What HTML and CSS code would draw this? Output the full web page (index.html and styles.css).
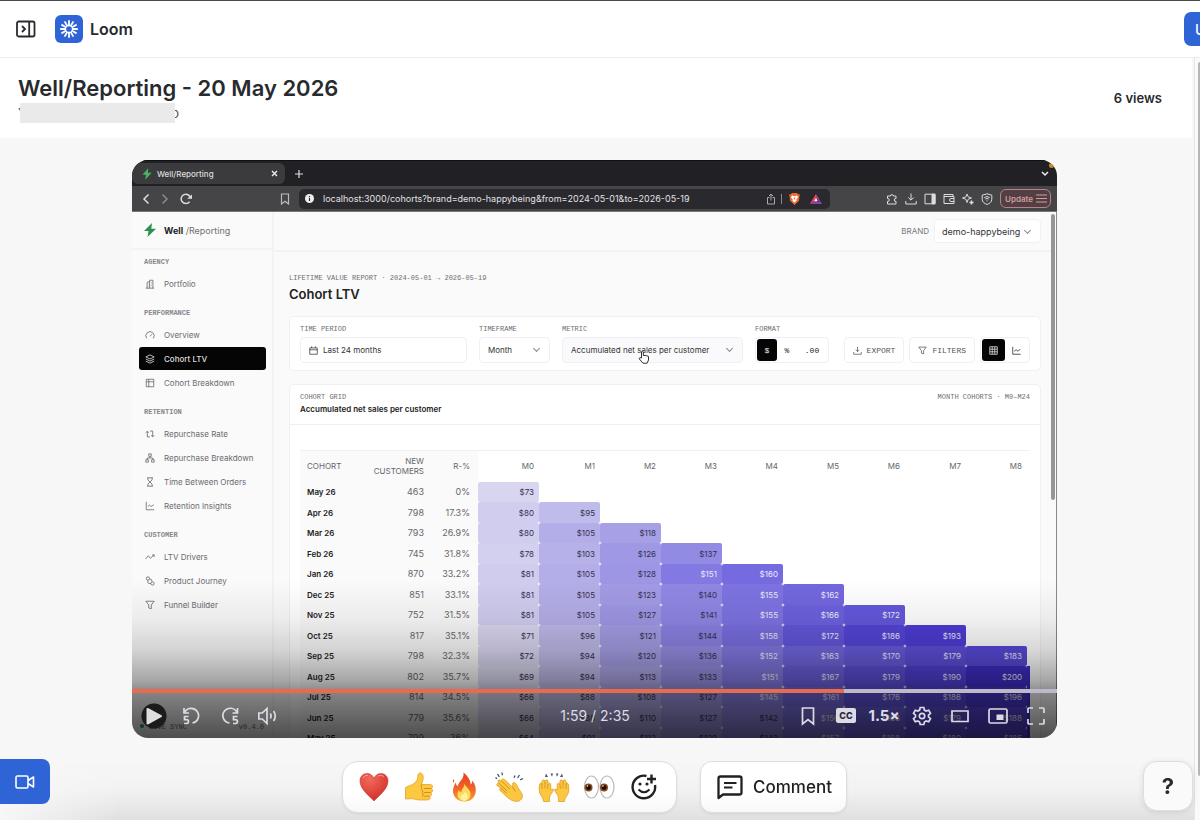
FILE: index.html
```html
<!DOCTYPE html>
<html lang="en">
<head>
  <meta charset="utf-8" />
  <meta name="viewport" content="width=device-width, initial-scale=1" />
  <title>Well/Reporting - 20 May 2026</title>
  <link rel="stylesheet" href="styles.css">
  <script src="script.js" defer></script>
</head>
<body>

  <header class="topbar">
    <button class="icon-btn" aria-label="Expand sidebar">
      <svg width="20" height="20" viewBox="0 0 20 20" fill="none" stroke="#292a2e" stroke-width="1.8"><rect x="1" y="2.5" width="17.5" height="15" rx="1.8"/><path d="M13.2 2.5v15M6 7l3 3-3 3"/></svg>
    </button>
    <a class="brand" href="#">
      <span class="brand-mark">
        <svg width="20" height="20" viewBox="-10 -10 20 20" stroke="#fff" fill="none"><circle r="3.6" stroke-width="1.5"/><path stroke-width="1.8" d="M0-4v-4.800M0 4v4.800M3.500-2l4.100-2.400M-3.500-2l-4.100-2.400M3.500 2l4.100 2.400M-3.500 2l-4.100 2.400M2-3.500l2.400-4.100M-2-3.500l-2.400-4.100M2 3.500l2.400 4.100M-2 3.500l-2.400 4.100M4 0h4.800M-4 0h-4.800"/></svg>
      </span>
      Loom
    </a>
    <div class="topbar-end"><button class="upgrade">Upgrade</button></div>
  </header>

  <div class="page">
    <main>
      <section class="title-row">
        <div>
          <h1>Well/Reporting - 20 May 2026</h1>
          <div class="owner"><span>Y</span><span>o</span></div>
        </div>
        <span class="views">6 views</span>
      </section>

      <div class="stage">
        <div class="player">

          <div class="tabs">
            <div class="tab">
              <svg width="10" height="12" viewBox="0 0 12 14"><path fill="#45b563" d="M7.5 0L.5 8h4.2L4 14l7.5-8.4H7z"/></svg>
              <span>Well/Reporting</span>
              <svg class="tab-close" width="7" height="7" viewBox="0 0 7 7" stroke="#eee" stroke-width="1.4"><path d="M1 1l5 5M6 1L1 6"/></svg>
            </div>
            <svg width="8" height="8" viewBox="0 0 8 8" stroke="#ddd" stroke-width="1.2"><path d="M4 0v8M0 4h8"/></svg>
            <svg class="tabs-more" width="8" height="6" viewBox="0 0 8 6" stroke="#eee" stroke-width="1.5" fill="none"><path d="M1 1l3 3 3-3"/></svg>
            <span class="rec-dot"></span>
          </div>

          <div class="toolbar">
            <div class="nav-icons">
              <svg width="8" height="12" viewBox="0 0 8 12" fill="none" stroke="#ddd" stroke-width="1.5"><path d="M6.500 1.500L2 6l4.500 4.500"/></svg>
              <svg width="8" height="12" viewBox="0 0 8 12" fill="none" stroke="#8a8a8d" stroke-width="1.5"><path d="M1.500 1.500L6 6l-4.500 4.500"/></svg>
              <svg width="12" height="12" viewBox="0 0 12 12" fill="none" stroke="#ddd" stroke-width="1.5"><path d="M9.600 8.800A4.700 4.700 0 1 1 10.500 5"/><path fill="#ddd" stroke="none" d="M7.200 5.800H12V1.500z"/></svg>
            </div>
            <svg class="tb-mark" width="10" height="12" viewBox="0 0 10 12" fill="none" stroke="#bbb" stroke-width="1.2"><path d="M1.500 1h7v10L5 8.300 1.500 11z"/></svg>
            <div class="address">
              <svg width="9" height="9" viewBox="0 0 9 9"><circle cx="4.500" cy="4.500" r="4.500" fill="#eee"/><path stroke="#29292e" stroke-width="1.200" d="M4.500 4v3M4.500 2v1.200"/></svg>
              <input type="text" aria-label="Address" value="localhost:3000/cohorts?brand=demo-happybeing&amp;from=2024-05-01&amp;to=2026-05-19">
              <svg width="10" height="12" viewBox="0 0 10 12" fill="none" stroke="#aaa"><path d="M3.500 4.500H1.500V11h7V4.500h-2M5 7.500V1M3 3l2-2 2 2"/></svg>
              <i class="bar"></i>
              <svg width="11" height="12" viewBox="0 0 11 12"><path fill="#f1682d" d="M3 0h5l1.200 1.200L11 1.500l-.6 2L10 7.800 5.500 12 1 7.800.6 3.500 0 1.500l1.800-.3z"/><path fill="#fff" d="M3 2.600l2.500.6L8 2.600l1 1.900-1.700 2 .3 1.300-2.100 1.600-2.100-1.600.3-1.300-1.700-2z"/><path fill="#f1682d" d="M4.600 4.500h1.800l-.5 2h-.8z"/></svg>
              <svg class="bat" width="12" height="10" viewBox="0 0 12 10"><path fill="#d8344f" d="M6 0l3 5-3 1-6 4z"/><path fill="#8a3fa8" d="M6 0l6 10H0l4-3 5 1z"/><path fill="#e6475a" d="M6 0L0 10l4-3 2-3z"/><path fill="#fff" d="M6 4l1.800 3.200H4.200z"/></svg>
            </div>
            <div class="ext-icons">
              <svg viewBox="0 0 12 12"><path d="M1.500 3h3a1.400 1.400 0 1 1 2.800 0H10v2.600a1.400 1.400 0 1 0 0 2.700V11H1.500V8.300a1.400 1.400 0 1 0 0-2.700z"/></svg>
              <svg viewBox="0 0 12 12"><path d="M6 .5V7M3.300 4.500L6 7.200l2.700-2.700M.8 8v3h10.400V8"/></svg>
              <svg viewBox="0 0 12 12"><path d="M1 1.200h10v9.600H1z"/><path fill="#ddd" d="M8 1.200h3v9.600H8z"/></svg>
              <svg viewBox="0 0 12 12"><path d="M1 1.500h9v2H1zM1 3.500v7h10v-7zM11 5.500H8a1.500 1.500 0 0 0 0 3h3"/></svg>
              <svg viewBox="0 0 12 12"><path d="M5 1l1.200 2.900L9.500 5 6.200 6.200 5 9.500 3.800 6.200.5 5l3.300-1.100z"/><path d="M9.500 7.500v4M7.500 9.500h4" stroke-width="1.500"/></svg>
              <svg viewBox="0 0 12 12"><path d="M6 .8l4.800 1.400v4C10.800 9 8.500 10.700 6 11.400 3.500 10.700 1.200 9 1.200 6.200v-4z"/><path d="M3.300 4.500q2.700-1.800 5.400 0M4.300 6q1.700-1 3.400 0M6 7.300v1"/></svg>
            </div>
            <button class="update">Update
              <svg width="11" height="9" viewBox="0 0 11 9" stroke="#d59b9c" stroke-width="1.200"><path d="M0 1h11M0 4.500h11M0 8h11"/></svg>
            </button>
          </div>

          <div class="app">
            <aside class="side">
              <div class="side-logo">
                <svg width="12" height="14" viewBox="0 0 12 14"><path fill="#2f8f4e" d="M8 0L0 8h4.500L3.500 14 12 5.700H7.300z"/></svg>
                <p><b>Well</b> /Reporting</p>
              </div>
              <nav>
                <h4>AGENCY</h4>
                <a href="#"><svg viewBox="0 0 12 12"><path d="M1 11h10M2.500 11V4l3-1v8M5.500 3V1.500h4V11M7.500 4v1M7.500 7v1M4 6v.5M4 8.500V9"/></svg>Portfolio</a>
                <h4>PERFORMANCE</h4>
                <a href="#"><svg viewBox="0 0 12 12"><path d="M2 10a5 5 0 1 1 8 0M6 7.500L8.500 5"/></svg>Overview</a>
                <a href="#" class="active"><svg viewBox="0 0 12 12"><path d="M6 1l5 2.500L6 6 1 3.500zM1 6l5 2.500L11 6M1 8.500L6 11l5-2.500"/></svg>Cohort LTV</a>
                <a href="#"><svg viewBox="0 0 12 12"><path d="M1.500 1.500h9v9h-9zM1.500 4.500h9M4.500 1.500v9"/></svg>Cohort Breakdown</a>
                <h4>RETENTION</h4>
                <a href="#"><svg viewBox="0 0 12 12"><path d="M1 4.500l1.800-2 1.700 2M2.800 3v6.500H6M11 7.500l-1.800 2-1.700-2M9.200 9V2.500H6"/></svg>Repurchase Rate</a>
                <a href="#"><svg viewBox="0 0 12 12"><path d="M4.500 1h3v3h-3zM1 8h3v3H1zM8 8h3v3H8zM6 4v2M2.500 8V6h7v2"/></svg>Repurchase Breakdown</a>
                <a href="#"><svg viewBox="0 0 12 12"><path d="M2.500 1h7M2.500 11h7M3.500 1v2.500L8.500 8.500V11M8.500 1v2.500L3.500 8.500V11"/></svg>Time Between Orders</a>
                <a href="#"><svg viewBox="0 0 12 12"><path d="M1.500 1v9.500H11M3.500 6.500l2-1.500 2 1.500 3-2"/></svg>Retention Insights</a>
                <h4>CUSTOMER</h4>
                <a href="#"><svg viewBox="0 0 12 12"><path d="M.5 8.500l3.500-4 2.500 3 4.500-4M8.500 3.500H11V6"/></svg>LTV Drivers</a>
                <a href="#"><svg viewBox="0 0 12 12"><circle cx="3.500" cy="3" r="2"/><circle cx="9" cy="9" r="2"/><path d="M3.500 5v2.500q0 1.500 1.500 1.500h2M5.500 3.500q3 0 3 3.500"/></svg>Product Journey</a>
                <a href="#"><svg viewBox="0 0 12 12"><path d="M1 1.500h10L7.500 6v4.500l-3-1V6z"/></svg>Funnel Builder</a>
              </nav>
              <div class="side-foot"><span><i></i>LIVE SYNC</span><span>v0.4.0</span></div>
            </aside>

            <div class="content">
              <div class="content-head">
                <label for="brand">BRAND</label>
                <span class="pick pick-brand"><select id="brand"><option>demo-happybeing</option></select></span>
              </div>

              <div class="report">
                <p class="mono">LIFETIME VALUE REPORT · 2024-05-01 → 2026-05-19</p>
                <h2>Cohort LTV</h2>

                <div class="card filters">
                  <div class="field period">
                    <span class="mono">TIME PERIOD</span>
                    <button class="ctl"><svg width="9" height="9" viewBox="0 0 12 12"><path d="M1 2.500h10V11H1zM1 5h10M3.500.5v2M8.500.5v2"/></svg>Last 24 months</button>
                  </div>
                  <div class="field timeframe">
                    <label class="mono" for="timeframe">TIMEFRAME</label>
                    <span class="pick"><select id="timeframe"><option>Month</option></select></span>
                  </div>
                  <div class="field metric">
                    <label class="mono" for="metric">METRIC</label>
                    <span class="pick tinted"><select id="metric"><option>Accumulated net sales per customer</option></select></span>
                  </div>
                  <div class="field">
                    <span class="mono">FORMAT</span>
                    <div class="segment format"><button class="on">$</button><button>%</button><button>.00</button></div>
                  </div>
                  <div class="actions">
                    <button class="ctl code"><svg width="9" height="9" viewBox="0 0 12 12"><path d="M6 1v6.500M3.500 5L6 7.500 8.500 5M1 8v3h10V8"/></svg>EXPORT</button>
                    <button class="ctl code"><svg width="9" height="9" viewBox="0 0 12 12"><path d="M1 1.500h10L7.500 6v4.500l-3-1V6z"/></svg>FILTERS</button>
                    <div class="segment view">
                      <button class="on" aria-label="Table"><svg width="9" height="9" viewBox="0 0 12 12"><path d="M1 1h10v10H1zM1 4.300h10M1 7.700h10M4.300 1v10M7.700 1v10"/></svg></button>
                      <button aria-label="Chart"><svg width="9" height="9" viewBox="0 0 12 12"><path d="M1 1v10h10.500M3 7l2.500-2L8 7l3-3"/></svg></button>
                    </div>
                  </div>
                </div>

                <div class="card grid-card">
                  <div class="grid-head">
                    <div>
                      <p class="mono">COHORT GRID</p>
                      <h3>Accumulated net sales per customer</h3>
                    </div>
                    <p class="mono">MONTH COHORTS · M0–M24</p>
                  </div>
                  <table>
                    <colgroup><col class="c-name"><col class="c-new"><col class="c-rate"><col span="9" class="c-month"><col></colgroup>
                    <thead>
                      <tr><th>COHORT</th><th>NEW<br>CUSTOMERS</th><th>R-%</th><th>M0</th><th>M1</th><th>M2</th><th>M3</th><th>M4</th><th>M5</th><th>M6</th><th>M7</th><th>M8</th><th></th></tr>
                    </thead>
                    <tbody id="cohorts"></tbody>
                  </table>
                </div>
              </div>
            </div>
            <div class="app-scroll"><i></i></div>
          </div>

          <svg class="pointer" width="12" height="14" viewBox="0 0 12 14"><path fill="#fff" stroke="#333" d="M3.500 8V1.800q.9-1.300 1.800 0V5.500q2.500-.5 5.200.9V10l-1.400 3.200H5L1 8.600q.8-1.600 2.500-.6z"/></svg>

          <div class="shade"></div>
          <div class="controls">
            <div class="progress"><div style="width:77%"></div></div>
            <div class="control-row">
              <div class="control-group left">
                <button class="play" aria-label="Play"><svg width="20" height="20" viewBox="0 0 20 20"><path fill="#dedede" stroke="#dedede" stroke-width="2" stroke-linejoin="round" d="M3.500 3v14.500L17 10.200z"/></svg></button>
                <button aria-label="Back 5 seconds"><svg width="20" height="20" viewBox="0 0 20 20"><path d="M2 2v5h5M2.500 6.500A7.400 7.400 0 1 1 10.500 17"/><path d="M6.500 10.500h-4v3.200h2q2 .2 2 1.900t-2 1.900H2"/></svg></button>
                <button aria-label="Forward 5 seconds"><svg width="20" height="20" viewBox="0 0 20 20"><path d="M17.500 2v5h-5M17 6.500A7.400 7.400 0 1 0 9.500 17"/><path d="M17.500 10.500h-4v3.200h2q2 .2 2 1.900t-2 1.900H13"/></svg></button>
                <button aria-label="Volume"><svg width="20" height="20" viewBox="0 0 20 20"><path d="M.8 7h3.500L9 2.500v15L4.300 13H.8zM12.300 7.500q1.500 2.500 0 5M15.500 5q3.500 5 0 10"/></svg></button>
              </div>
              <span class="time">1:59 / 2:35</span>
              <div class="control-group right">
                <button aria-label="Bookmark"><svg width="20" height="20" viewBox="0 0 20 20"><path d="M4.500 2h11v16L10 13.500 4.500 18z"/></svg></button>
                <button aria-label="Captions" class="cc"><span>CC</span></button>
                <button class="speed">1.5×</button>
                <button aria-label="Settings"><svg width="20" height="20" viewBox="0 0 20 20"><path d="M8.200 1.500h3.600l.6 2.600 1.700 1 2.600-.8 1.800 3.100-2 1.800v1.700l2 1.800-1.800 3.100-2.600-.8-1.700 1-.6 2.500H8.200L7.600 16l-1.700-1-2.600.8-1.800-3.100 2-1.800V9.200l-2-1.800 1.800-3.100 2.600.8 1.700-1z"/><circle cx="10" cy="10" r="2.700"/></svg></button>
                <button aria-label="Theater"><svg width="20" height="20" viewBox="0 0 20 20"><path d="M2 5h16v10.500H2z"/></svg></button>
                <button aria-label="Picture in picture"><svg width="20" height="20" viewBox="0 0 20 20"><rect x="1" y="3" width="18" height="14" rx="1.500"/><path fill="#dcdae4" stroke="none" d="M8.500 8.500h7v5.500h-7z"/></svg></button>
                <button aria-label="Fullscreen"><svg width="20" height="20" viewBox="0 0 20 20"><path d="M2 7V3q0-1 1-1h4M13 2h4q1 0 1 1v4M18 13v4q0 1-1 1h-4M7 18H3q-1 0-1-1v-4"/></svg></button>
              </div>
            </div>
          </div>
        </div>

        <div class="dock">
          <div class="dock-card reactions">
            <button aria-label="Love"><svg width="30" height="30" viewBox="0 0 30 30"><defs><radialGradient id="heart" cx=".35" cy=".2" r=".8"><stop offset="0" stop-color="#f26a5c"/><stop offset="1" stop-color="#d3302b"/></radialGradient></defs><path fill="url(#heart)" stroke="#c2362c" stroke-width=".6" d="M15 29C10.500 24 1 17.500 1 9c0-4.500 3-7.500 7-7.500 3.500 0 6 2 7 5 1-3 3.500-5 7-5 4 0 7 3 7 7.500 0 8.500-9.500 15-14 20z"/><path fill="none" stroke="#fa9d92" stroke-width="1" d="M4 6q1.500-3 5-2.800M19 4q2.500-2 6 .5"/></svg></button>
            <button aria-label="Thumbs up"><svg width="30" height="30" viewBox="0 0 30 30"><path fill="#fbc83f" stroke="#dd9c1e" stroke-width=".7" d="M1.500 15.500l3-1.500c4-1 7.500-3.500 8.800-6.500.7-1.600.4-4.500 1-5.500.8-1.600 3.600-1.400 4.500 1 1.300 3.200-.3 6.500-1.300 9.500h8.700c3 0 3 3.700.8 4 2.500.5 2 4-.4 4 1.800.9 1 3.700-1 3.700 1.300 1.300.4 3.800-2 3.800H16c-3.500 0-5.500-1-7.500-1.300l-7 .3z"/><path fill="none" stroke="#d58e1b" stroke-width="1" d="M17.500 12.500q-1 2 .5 4M27 16.500h-7M26.600 20.500H20M25.600 24.200H20M17 17q2.500 1 1.500 3.700 1.500 1.800 0 4"/></svg></button>
            <button aria-label="Fire"><svg width="30" height="30" viewBox="0 0 30 30"><defs><linearGradient id="fire" x2="0" y2="1"><stop offset="0" stop-color="#e63c20"/><stop offset=".6" stop-color="#f4682b"/><stop offset="1" stop-color="#f9a12e"/></linearGradient></defs><path fill="url(#fire)" d="M14.500.5c3 2.500 7 6.500 7.200 12 1.200-1 1.600-2.300 1.600-4 3 4 4.200 8 3.200 12.500-1 5-5.500 8.500-11 8.500-6.500 0-11.500-4.500-11.500-10.500 0-3.500 1.500-6 2.400-8.500.6 1.800 1 3 2.600 3.800C9 9.500 15.500 7.500 14.500.5zM4.500 7q1.500 1.700.2 4-1.700-1.500-.2-4z"/><path fill="#ffdc58" d="M15.500 11.500c1 4 5.500 5 6 10 .4 4.500-2.500 7.500-6 7.500-4 0-7-2.500-7-6.500 0-2 .7-3.500 1.500-4.500.5 1.200 1 2 2.300 2.400 0-3.500 3.400-4.900 3.200-8.900z"/><path fill="#fff2a8" d="M16 20q3.500 3 2.500 6-1.200 2.700-3.500 2.700T11.500 26q0-2 1.500-3 2-.5 3-3z"/></svg></button>
            <button aria-label="Clap"><svg width="30" height="30" viewBox="0 0 30 30"><path fill="#fbc740" stroke="#d9961d" stroke-width=".7" d="M3 13.500c-.8-1.400.9-2.800 2.200-1.800l-1-1.600c-.9-1.700 1.200-3 2.500-1.700L8 9.500c-1.300-1.900 1-3.500 2.500-2l8 7.500c.6-1.800-.6-3.600.7-4.300 2-.9 3.600 2 4.700 5 2 3 4.600 6.300 4.600 8.800 0 1.500-2 4-3.500 4.600-3.500.9-7.500-.4-10.500-2.800l-8.500-7.800c-1.300-1.300 0-2.700 1.300-2.200z"/><path fill="none" stroke="#d0881a" stroke-width=".9" d="M5.200 11.700l8 7.300M8 9.500l8 7.500M7 16.300l5.500 5M18.500 15l3 4.500"/><path fill="none" stroke="#43546b" stroke-width="1.300" d="M1.500 5.500L3 6.800M3.500 2l1.800 2.800M8 .5l.3 2.800M21 3.500l-1 2.300M25.500 3L23.500 6M29 6.500l-2.800 1.300"/></svg></button>
            <button aria-label="Raised hands"><svg width="32" height="30" viewBox="0 0 32 30"><g id="hand"><path fill="#fbc740" stroke="#d9961d" stroke-width=".7" d="M5.500 29.500c0-4-3.500-6-4-9.500-.6-3.500-.5-7 .6-8.500.8-1 1.800-.4 1.800 1-.2-2.500.2-4.500 1.400-4.800 1.400-.2 1.700 2 1.700 4 .1-2.300.7-4.200 2-3.900 1.300.2 1.300 2.600 1 5 .7-1.500 2-2.200 2.500-1 .5 1.500.2 4 .4 6.200 1.200-1.200 2.600-1.400 2.500-.1-.5 2.500-2.900 4-3.500 6.300-.5 1.300-.4 3.300-.3 5.300z"/><path fill="none" stroke="#d0881a" stroke-width=".7" d="M3.900 12v5M7 11.500v5M10 12.500l-.5 4.500"/></g><use href="#hand" transform="matrix(-1 0 0 1 32 0)"/><path fill="#43546b" d="M7 5l1-3.500L10 5zM12.500 1.500h2.500l-1 3.300zM18 1.500h2.500l-1.600 3.300zM22 5l2-3.500L25 5z"/></svg></button>
            <button aria-label="Eyes"><svg width="32" height="30" viewBox="0 0 32 30"><g fill="#fff" stroke="#b9b9b9" stroke-width="1.200"><ellipse cx="8.500" cy="15" rx="7" ry="11"/><ellipse cx="24" cy="15" rx="7" ry="11"/></g><circle cx="5.500" cy="15.500" r="4" fill="#8b4a1c"/><circle cx="21" cy="15.500" r="4" fill="#8b4a1c"/><circle cx="5.500" cy="15.500" r="2.400" fill="#1b0d05"/><circle cx="21" cy="15.500" r="2.400" fill="#1b0d05"/><circle cx="4.500" cy="14" r=".8" fill="#fff"/><circle cx="20" cy="14" r=".8" fill="#fff"/></svg></button>
            <button aria-label="Add reaction"><svg width="30" height="30" viewBox="0 0 30 30" fill="none" stroke="#202124" stroke-width="2.400"><path d="M17.500 4A11.300 11.300 0 1 0 26 13M22.500 2.500v9M18 7h9"/><path stroke-width="2" d="M9.500 17.500q5.500 5.500 11 0"/><circle cx="11" cy="12" r="1.600" fill="#202124" stroke="none"/><circle cx="18" cy="12" r="1.600" fill="#202124" stroke="none"/></svg></button>
          </div>
          <button class="dock-card comment">
            <svg width="28" height="28" viewBox="0 0 28 28" fill="none" stroke="#202124" stroke-width="2.300" stroke-linejoin="round"><path d="M2.500 25V5.500q0-2 2-2h19q2 0 2 2v14q0 2-2 2H7z"/><path stroke-width="2" d="M8 10h12.500M8 14.500h8.500"/></svg>
            Comment
          </button>
        </div>
      </div>
    </main>
    <div class="rail"><i></i></div>
  </div>

  <div class="bottom-fade"></div>
  <button class="record" aria-label="Record">
    <svg width="20" height="16" viewBox="0 0 20 16" fill="none" stroke="#fff" stroke-width="1.600"><rect x="1" y="2" width="12" height="12" rx="1.500"/><path stroke-linejoin="round" d="M13 6.500l5.500-3.500v10L13 9.500"/></svg>
  </button>
  <button class="help">?</button>

</body>
</html>
```
FILE: styles.css
```css
* {
  box-sizing: border-box;
}

body {
  margin: 0;
  height: 100vh;
  overflow: hidden;
  display: flex;
  flex-direction: column;
  background: #fff;
  border-top: 1px solid #4b494d;
  color: #292a2e;
  font-family: Inter, "Liberation Sans", sans-serif;
}

h1, h2, h3, h4, p {
  margin: 0;
}

button, select, input {
  font: inherit;
  color: inherit;
  background: none;
  border: 0;
  padding: 0;
  margin: 0;
}

svg {
  display: block;
  flex: none;
}

a {
  color: inherit;
  text-decoration: none;
}

/* page header */

.topbar {
  flex: none;
  display: flex;
  align-items: center;
  height: 57px;
  padding-left: 16px;
  overflow: hidden;
  border-bottom: 1px solid #ececed;
}

.brand {
  display: flex;
  align-items: center;
  gap: 7px;
  margin-left: 19px;
  font-size: 16px;
  font-weight: 600;
}

.brand-mark {
  display: grid;
  place-items: center;
  width: 28px;
  height: 28px;
  border-radius: 6px;
  background: #2f64d6;
}

.topbar-end {
  width: 16px;
  margin-left: auto;
}

.upgrade {
  height: 34px;
  padding: 0 11px;
  border-radius: 7px;
  background: #2f64d6;
  color: #fff;
  font-size: 14px;
  font-weight: 500;
}

.page {
  flex: 1;
  min-height: 0;
  display: flex;
}

main {
  flex: 1;
  display: flex;
  flex-direction: column;
  min-width: 0;
  background: #f7f7f7;
}

.rail {
  width: 6px;
  padding: 4px 0 0 3px;
  border-left: 1px solid #e6e6e6;
  background: #fafafa;
}

.rail i {
  display: block;
  height: 714px;
  border-radius: 3px 0 0 3px;
  background: #b6b6b6;
}

.title-row {
  display: flex;
  justify-content: space-between;
  align-items: center;
  height: 80px;
  margin-right: 2px;
  padding: 0 30px 0 18px;
  background: #fff;
}

h1 {
  font-size: 22px;
  line-height: 30px;
  font-weight: 600;
}

.owner {
  position: relative;
  display: flex;
  justify-content: space-between;
  width: 161px;
  font-size: 13px;
  line-height: 20px;
  color: #505258;
}

/* the name is masked */
.owner::after {
  content: "";
  position: absolute;
  inset: 0 4px 0 2px;
  background: #eaeaea;
}

.views {
  font-size: 13px;
  font-weight: 600;
}

.stage {
  padding: 22px 137px 0 132px;
}

/* player */

.player {
  position: relative;
  display: flex;
  flex-direction: column;
  aspect-ratio: 8 / 5;
  overflow: hidden;
  border-radius: 16px;
  background: #fafafa;
}

.tabs {
  flex: none;
  display: flex;
  align-items: center;
  gap: 10px;
  height: 26px;
  padding-right: 8px;
  border-top: 1px solid #111;
  background: #212125;
}

.tab {
  display: flex;
  align-items: center;
  gap: 5px;
  width: 153px;
  height: 21px;
  padding: 0 7px 0 10px;
  border-radius: 6px;
  background: #3b3b3e;
  color: #ddd;
  font-size: 8px;
  font-weight: 500;
}

.tab-close, .tabs-more {
  margin-left: auto;
}

.rec-dot {
  position: absolute;
  top: 3px;
  right: 3px;
  width: 5px;
  height: 5px;
  border-radius: 50%;
  background: #c98a2a;
}

.toolbar {
  flex: none;
  display: flex;
  align-items: center;
  height: 26px;
  padding: 0 6px 0 10px;
  background: #454548;
  border-bottom: 1px solid #77777a;
}

.nav-icons {
  display: flex;
  align-items: center;
  gap: 11px;
}

.tb-mark {
  margin-left: 88px;
}

.address {
  flex: 1;
  display: flex;
  align-items: center;
  height: 20px;
  margin-left: 9px;
  padding: 0 8px 0 6px;
  border-radius: 5px;
  background: #29292e;
}

.address input {
  flex: 1;
  min-width: 0;
  padding-left: 9px;
  color: #e2e2e4;
  font-size: 9px;
}

.address .bar {
  width: 1px;
  height: 10px;
  margin: 0 7px 0 5px;
  background: #8a8a8d;
}

.bat {
  margin-left: 10px;
}

.ext-icons {
  display: flex;
  gap: 7px;
  margin: 0 7px 0 56px;
}

.ext-icons svg {
  width: 12px;
  height: 12px;
  fill: none;
  stroke: #ddd;
}

.update {
  display: flex;
  align-items: center;
  gap: 3px;
  height: 19px;
  padding: 0 3px 0 4px;
  border: 1px solid #b98385;
  border-radius: 6px;
  background: #513f44;
  color: #d59b9c;
  font-size: 8px;
  font-weight: 600;
}

/* recorded app */

.app {
  flex: 1;
  display: flex;
  min-height: 0;
  overflow: hidden;
  color: #222;
  font-size: 8px;
}

.app svg {
  fill: none;
  stroke: currentColor;
}

.mono {
  font-family: "Liberation Mono", monospace;
  font-size: 7px;
  line-height: 10px;
  color: #6e6e72;
}

.side {
  display: flex;
  flex-direction: column;
  width: 142px;
  padding-bottom: 6px;
  border-right: 2px solid #f3f3f4;
}

.side-logo {
  display: flex;
  align-items: center;
  gap: 8px;
  height: 38px;
  padding-left: 12px;
  border-bottom: 2px solid #f3f3f4;
  font-size: 9px;
  color: #707074;
}

.side-logo svg {
  stroke: none;
}

.side-logo b {
  color: #222;
}

.side nav {
  display: flex;
  flex-direction: column;
  gap: 1px;
  padding: 7px 6px 0 7px;
}

.side h4 {
  margin: 12px 5px 4px;
  font: 700 7px/10px "Liberation Mono", monospace;
  color: #88888c;
}

.side h4:first-child {
  margin-top: 0;
}

.side nav a {
  display: flex;
  align-items: center;
  gap: 9px;
  height: 23px;
  padding-left: 6px;
  border-radius: 3px;
  color: #6b6b70;
}

.side nav a svg {
  width: 10px;
  height: 10px;
}

.side nav a.active {
  background: #050505;
  color: #ddd;
  font-weight: 500;
}

.side-foot {
  display: flex;
  justify-content: space-between;
  margin-top: auto;
  padding: 0 8px;
  font: 7px/10px "Liberation Mono", monospace;
  color: #66666a;
}

.side-foot i {
  display: inline-block;
  width: 4px;
  height: 4px;
  margin: 0 5px 1px 0;
  border-radius: 50%;
  background: #1b9a4a;
}

.content {
  flex: 1;
  min-width: 0;
}

.content-head {
  display: flex;
  align-items: center;
  justify-content: flex-end;
  gap: 5px;
  height: 40px;
  padding-right: 10px;
  border-bottom: 2px solid #f3f3f4;
  color: #77777b;
}

.pick {
  position: relative;
  display: block;
}

.pick::after {
  content: "";
  position: absolute;
  top: 9px;
  right: 11px;
  width: 4px;
  height: 4px;
  border: solid #888;
  border-width: 0 1px 1px 0;
  transform: rotate(45deg);
}

.pick select {
  appearance: none;
  width: 100%;
  height: 26px;
  padding: 0 8px;
  border: 1px solid #f0f0f2;
  border-radius: 4px;
  background: #fff;
  color: #333;
}

.pick-brand {
  width: 107px;
}

.pick-brand select {
  height: 24px;
  padding: 0 7px;
  font-size: 9px;
}

.pick.tinted select {
  background: #fafafc;
}

.report {
  padding: 21px 10px 0 15px;
}

h2 {
  font-size: 13px;
  line-height: 22px;
  font-weight: 600;
}

.card {
  border: 1px solid #f0f0f2;
  border-radius: 5px;
  background: #fff;
}

.filters {
  display: flex;
  align-items: flex-end;
  gap: 12px;
  height: 55px;
  margin: 11px 0 13px;
  padding: 0 10px 7px;
}

.field {
  display: flex;
  flex-direction: column;
  gap: 3px;
}

.period { width: 167px; }
.timeframe { width: 71px; }
.metric { width: 181px; }

.ctl {
  display: flex;
  align-items: center;
  gap: 5px;
  height: 26px;
  padding: 0 8px;
  border: 1px solid #f0f0f2;
  border-radius: 4px;
  color: #333;
}

.code {
  font-family: "Liberation Mono", monospace;
  color: #55555a;
}

.segment {
  display: flex;
  height: 26px;
  padding: 1px;
  border: 1px solid #f0f0f2;
  border-radius: 4px;
  font-family: "Liberation Mono", monospace;
}

.segment button {
  display: grid;
  place-items: center;
  width: 20px;
  border-radius: 3px;
}

.segment .on {
  background: #050505;
  color: #eee;
}

.format button:last-child {
  width: 30px;
}

.view button {
  width: 23px;
}

.actions {
  display: flex;
  gap: 5px;
  margin-left: auto;
}

.grid-card {
  height: 400px;
}

.grid-head {
  display: flex;
  justify-content: space-between;
  height: 40px;
  padding: 7px 10px 0;
  border-bottom: 1px solid #f0f0f2;
}

h3 {
  font-size: 8px;
  line-height: 14px;
  font-weight: 600;
}

table {
  width: calc(100% - 20px);
  margin: 25px 10px 0;
  border-top: 1px solid #f0f0f2;
  border-collapse: separate;
  border-spacing: 0;
  table-layout: fixed;
}

.c-name { width: 58px; }
.c-new { width: 74px; }
.c-rate { width: 46px; }
.c-month { width: 61px; }

th, td {
  height: 21px;
  padding: 0 5px 0 0;
  text-align: right;
  font-weight: 400;
  line-height: 10px;
  white-space: nowrap;
  color: #66666a;
}

tr:nth-child(odd) td {
  height: 20px;
}

thead th, thead th:first-child {
  height: 31px;
  padding-bottom: 2px;
}

th:first-child, td:first-child {
  padding: 0 0 0 7px;
  text-align: left;
}

th:nth-child(2), td:nth-child(2),
th:nth-child(3), td:nth-child(3) {
  padding-right: 8px;
}

th:nth-child(-n+3), td:nth-child(-n+3) {
  background: #fafafa;
}

td:first-child {
  color: #222;
  font-weight: 600;
}

td:nth-child(2), td:nth-child(3) {
  font-size: 9px;
}

.heat {
  border-radius: 2px;
  color: #34304f;
}

.heat.light {
  color: #eceafd;
}

.sliver {
  padding: 0;
}

.app-scroll {
  width: 6px;
  padding: 2px 1px 0 0;
  border-right: 1px solid #8a8a8a;
}

.app-scroll i {
  display: block;
  height: 286px;
  border-radius: 3px;
  background: #969696;
}

.pointer {
  position: absolute;
  left: 506px;
  top: 190px;
}

/* player controls, over the recording */

.shade {
  position: absolute;
  inset: auto 0 0;
  height: 158px;
  background: linear-gradient(rgba(0,0,0,0), rgba(0,0,0,.06) 25%, rgba(0,0,0,.16) 45%, rgba(0,0,0,.34) 64%, rgba(0,0,0,.48) 72%, rgba(0,0,0,.69));
}

.controls {
  position: absolute;
  inset: auto 0 0;
  height: 49px;
}

.progress {
  height: 4px;
  background: #bdb9c9;
}

.progress div {
  height: 4px;
  background: #ea6a4f;
}

.control-row {
  display: flex;
  align-items: center;
  height: 45px;
  color: #dcdae4;
}

.control-group {
  flex: 1;
  display: flex;
}

.left { padding-left: 3px; }

.right {
  justify-content: flex-end;
  padding-right: 2px;
}

.control-group button {
  display: grid;
  place-items: center;
  width: 38px;
  height: 26px;
}

.control-group svg {
  fill: none;
  stroke: #dcdae4;
  stroke-width: 1.700;
}

.play {
  background: radial-gradient(circle, #1b1b1b 12px, transparent 13px);
}

.time {
  font-size: 14px;
}

.cc span {
  padding: 0 3px;
  border-radius: 2px;
  background: #dcdae4;
  color: #2a2740;
  font-size: 9px;
  font-weight: 800;
  line-height: 15px;
}

.speed {
  font-size: 15px;
  font-weight: 700;
}

/* reactions */

.dock {
  position: relative;
  z-index: 1;
  display: flex;
  justify-content: center;
  gap: 23px;
  margin-top: 23px;
}

.dock-card {
  display: flex;
  align-items: center;
  height: 52px;
  border: 1px solid #dedee0;
  border-radius: 16px;
  background: linear-gradient(#fff 60%, #f8f8f8);
  box-shadow: 0 1px 3px rgba(0,0,0,.08);
}

.reactions {
  padding: 0 10px 0 8px;
}

.reactions button {
  display: grid;
  place-items: center;
  width: 45px;
  height: 45px;
}

.comment {
  gap: 9px;
  padding: 0 14px 0 15px;
  border-radius: 12px;
  font-size: 17px;
  font-weight: 500;
  color: #202124;
}

.bottom-fade {
  position: fixed;
  inset: auto 6px 0 0;
  height: 60px;
  background: linear-gradient(rgba(0,0,0,0), rgba(0,0,0,.02) 50%, rgba(0,0,0,.09));
  mask-image: linear-gradient(90deg, transparent, #000 120px);
}

.record {
  position: fixed;
  left: 0;
  bottom: 16px;
  display: grid;
  place-items: center;
  width: 50px;
  height: 45px;
  border-radius: 0 8px 8px 0;
  background: #2f64d6;
}

.help {
  position: fixed;
  right: 7px;
  bottom: 9px;
  width: 50px;
  height: 50px;
  border: 1px solid #dedee0;
  border-radius: 14px;
  background: #fafafa;
  box-shadow: 0 1px 6px rgba(0,0,0,.1);
  font-size: 22px;
  font-weight: 700;
}
```
FILE: script.js
```js
const cohorts = [
  ['May 26', 463, '0%', 73],
  ['Apr 26', 798, '17.3%', 80, 95],
  ['Mar 26', 793, '26.9%', 80, 105, 118],
  ['Feb 26', 745, '31.8%', 78, 103, 126, 137],
  ['Jan 26', 870, '33.2%', 81, 105, 128, 151, 160],
  ['Dec 25', 851, '33.1%', 81, 105, 123, 140, 155, 162],
  ['Nov 25', 752, '31.5%', 81, 105, 127, 141, 155, 166, 172],
  ['Oct 25', 817, '35.1%', 71, 96, 121, 144, 158, 172, 186, 193],
  ['Sep 25', 798, '32.3%', 72, 94, 120, 136, 152, 163, 170, 179, 183],
  ['Aug 25', 802, '35.7%', 69, 94, 113, 133, 151, 167, 179, 190, 200],
  ['Jul 25', 814, '34.5%', 66, 88, 108, 127, 145, 161, 176, 186, 196],
  ['Jun 25', 779, '35.6%', 66, 88, 110, 127, 142, 156, 168, 179, 188],
  ['May 25', 799, '36%', 64, 91, 112, 129, 143, 157, 168, 180, 185]
];

// value -> rgb
const stops = [
  [65, [224, 222, 243]],
  [81, [207, 204, 238]],
  [105, [180, 174, 232]],
  [128, [157, 150, 228]],
  [151, [130, 121, 226]],
  [172, [99, 87, 219]],
  [193, [77, 60, 213]],
  [200, [63, 45, 200]]
];

function heat(value) {
  let i = 1;
  while (i < stops.length - 1 && value > stops[i][0]) i++;
  const [v0, a] = stops[i - 1];
  const [v1, b] = stops[i];
  const t = Math.max(0, Math.min(1, (value - v0) / (v1 - v0)));
  return 'rgb(' + a.map((c, n) => Math.round(c + (b[n] - c) * t)).join(',') + ')';
}

document.getElementById('cohorts').innerHTML = cohorts.map(([name, size, rate, ...values], row) => {
  const cells = Array.from({ length: 9 }, (_, i) => {
    const v = values[i];
    if (v === undefined) return '<td></td>';
    return `<td class="heat${v >= 145 ? ' light' : ''}" style="background:${heat(v)}">$${v}</td>`;
  }).join('');
  // M9 is cut off by the card edge, only its first pixels show
  const next = row > 8 ? `<td class="sliver" style="background:${heat(200)}"></td>` : '<td class="sliver"></td>';
  return `<tr><td>${name}</td><td>${size}</td><td>${rate}</td>${cells}${next}</tr>`;
}).join('');
```
